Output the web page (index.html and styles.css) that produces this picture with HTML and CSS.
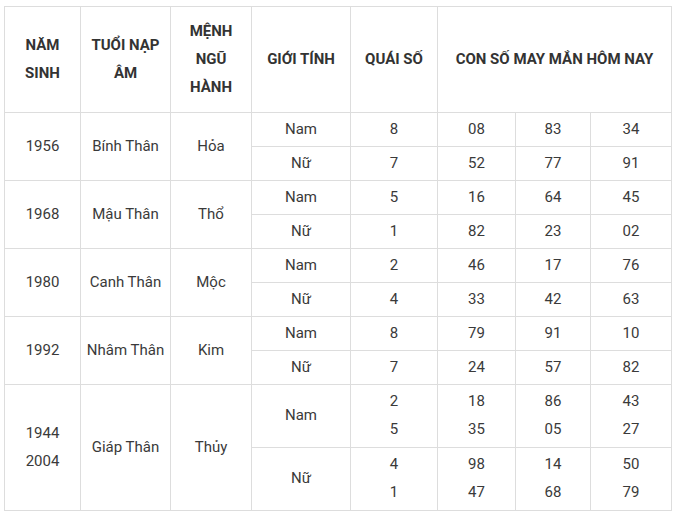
FILE: index.html
```html
<!DOCTYPE html>
<html lang="vi">
<head>
<meta charset="utf-8">
<title>Con số may mắn</title>
<link rel="stylesheet" href="styles.css">
</head>
<body>
<table class="lucky">
  <colgroup>
    <col class="c1"><col class="c2"><col class="c3"><col class="c4"><col class="c5"><col class="c6"><col class="c7"><col class="c8">
  </colgroup>
  <thead>
    <tr class="head">
      <th>NĂM<br>SINH</th>
      <th>TUỔI NẠP<br>ÂM</th>
      <th>MỆNH<br>NGŨ<br>HÀNH</th>
      <th>GIỚI TÍNH</th>
      <th>QUÁI SỐ</th>
      <th colspan="3">CON SỐ MAY MẮN HÔM NAY</th>
    </tr>
  </thead>
  <tbody>
    <tr class="row">
      <td rowspan="2">1956</td><td rowspan="2">Bính Thân</td><td rowspan="2">Hỏa</td>
      <td>Nam</td><td>8</td><td>08</td><td>83</td><td>34</td>
    </tr>
    <tr class="row">
      <td>Nữ</td><td>7</td><td>52</td><td>77</td><td>91</td>
    </tr>
    <tr class="row">
      <td rowspan="2">1968</td><td rowspan="2">Mậu Thân</td><td rowspan="2">Thổ</td>
      <td>Nam</td><td>5</td><td>16</td><td>64</td><td>45</td>
    </tr>
    <tr class="row">
      <td>Nữ</td><td>1</td><td>82</td><td>23</td><td>02</td>
    </tr>
    <tr class="row">
      <td rowspan="2">1980</td><td rowspan="2">Canh Thân</td><td rowspan="2">Mộc</td>
      <td>Nam</td><td>2</td><td>46</td><td>17</td><td>76</td>
    </tr>
    <tr class="row">
      <td>Nữ</td><td>4</td><td>33</td><td>42</td><td>63</td>
    </tr>
    <tr class="row">
      <td rowspan="2">1992</td><td rowspan="2">Nhâm Thân</td><td rowspan="2">Kim</td>
      <td>Nam</td><td>8</td><td>79</td><td>91</td><td>10</td>
    </tr>
    <tr class="row">
      <td>Nữ</td><td>7</td><td>24</td><td>57</td><td>82</td>
    </tr>
    <tr class="row tall">
      <td rowspan="2">1944<br>2004</td><td rowspan="2">Giáp Thân</td><td rowspan="2">Thủy</td>
      <td>Nam</td><td>2<br>5</td><td>18<br>35</td><td>86<br>05</td><td>43<br>27</td>
    </tr>
    <tr class="row tall">
      <td>Nữ</td><td>4<br>1</td><td>98<br>47</td><td>14<br>68</td><td>50<br>79</td>
    </tr>
  </tbody>
</table>
</body>
</html>
```

FILE: styles.css
```css
html, body {
  margin: 0;
  padding: 0;
  background: #ffffff;
}

body {
  padding: 6px 0 0 4px;
  font-family: Roboto, "Liberation Sans", Arial, sans-serif;
  color: #333333;
}

.lucky {
  border-collapse: collapse;
  table-layout: fixed;
  width: 668px;
  font-size: 15px;
}

.c1 { width: 76px; }
.c2 { width: 90px; }
.c3 { width: 81px; }
.c4 { width: 99px; }
.c5 { width: 87px; }
.c6 { width: 78px; }
.c7 { width: 75px; }
.c8 { width: 81px; }

.lucky th,
.lucky td {
  border: 1px solid #dddddd;
  text-align: center;
  vertical-align: middle;
  padding: 0 2px 2px 2px;
  line-height: 28px;
}

.lucky th {
  font-weight: 700;
  color: #333333;
}

.lucky td {
  font-weight: 400;
  color: #3a3a3a;
}

.head { height: 106px; }
.row { height: 34px; }
.row.tall { height: 63px; }
```
